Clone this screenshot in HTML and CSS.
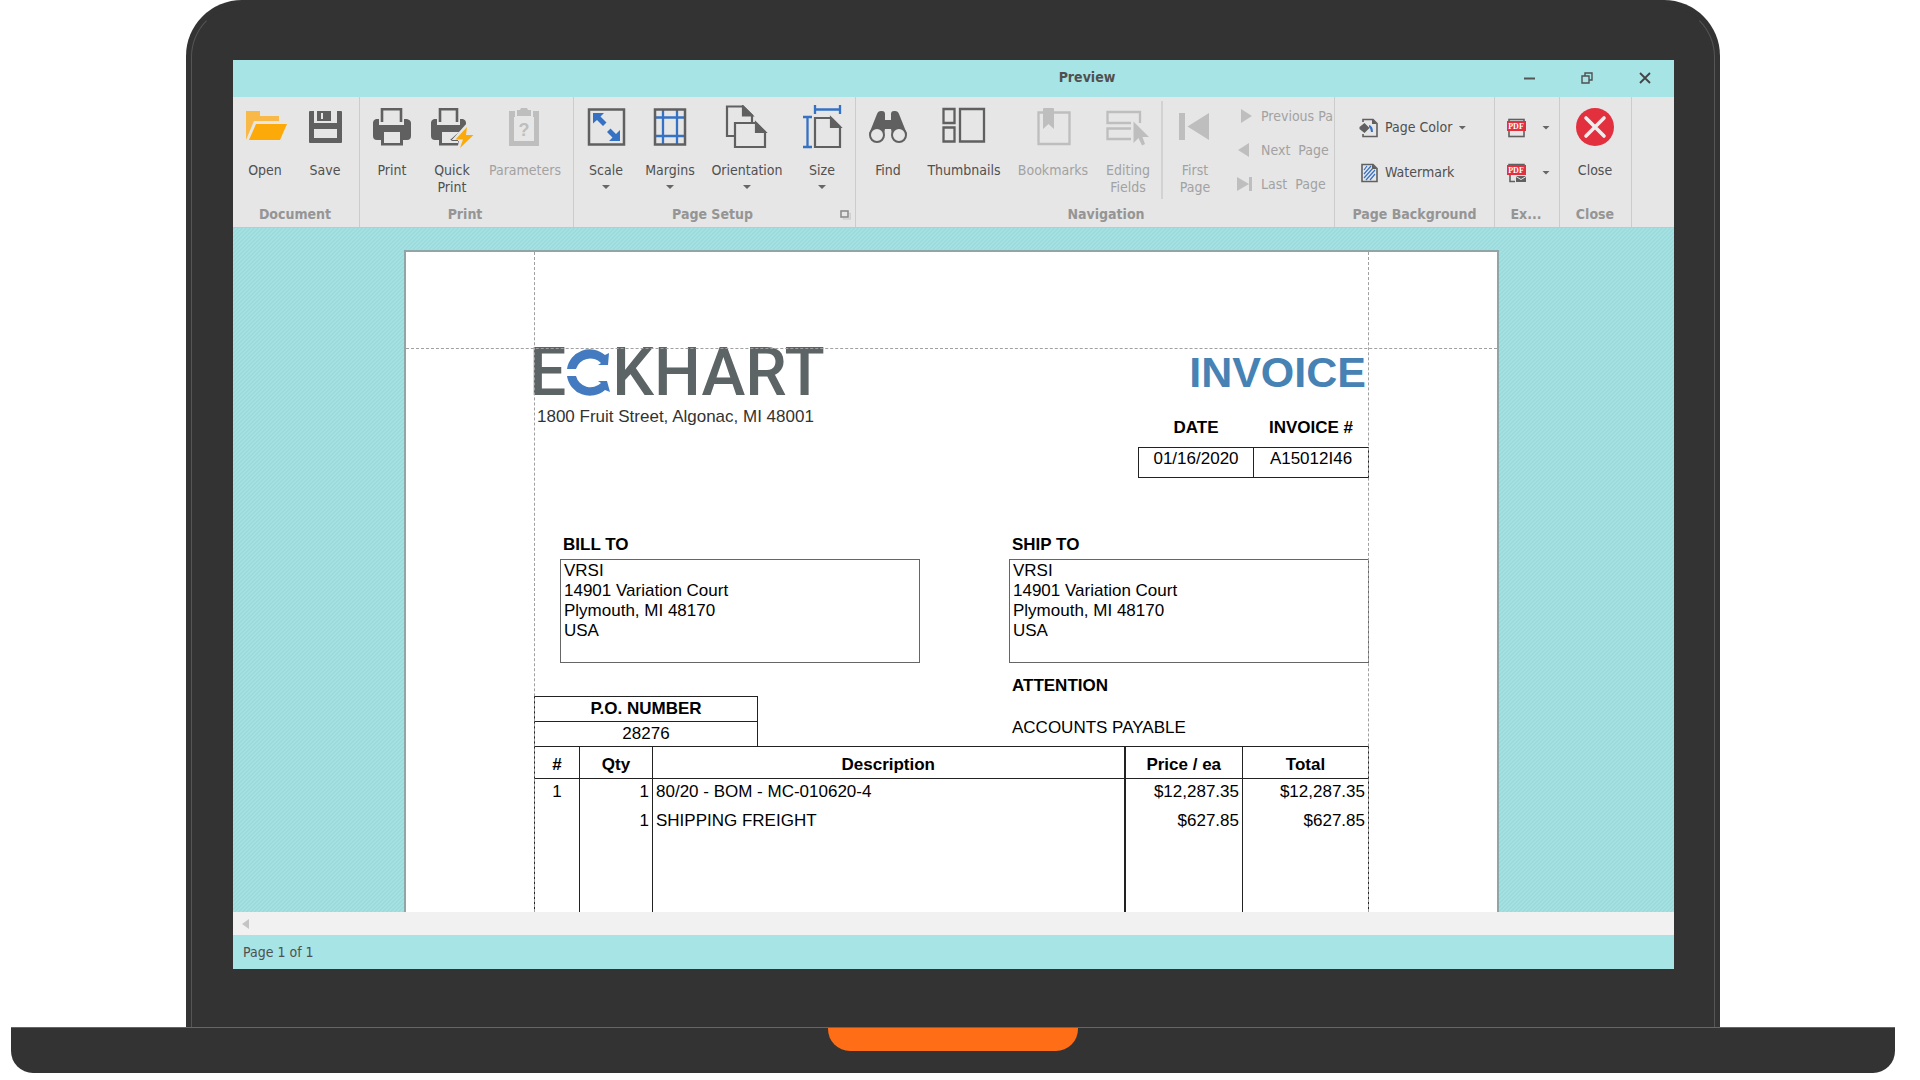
FILE: index.html
```html
<!DOCTYPE html>
<html lang="en">
<head>
<meta charset="utf-8">
<meta name="viewport" content="width=device-width, initial-scale=1">
<title>Preview</title>
<link rel="stylesheet" href="styles.css">
</head>
<body>
<div class="laptop">
  <div class="lid">
    <main class="screen">
      <header class="titlebar">
        <h1 class="titlebar-text">Preview</h1>
        <button class="win-btn" aria-label="Minimize"><svg width="12" height="12" viewBox="0 0 12 12"><path d="M1 6.5h11" stroke="#555" stroke-width="2"/></svg></button>
        <button class="win-btn" aria-label="Restore"><svg width="12" height="12" viewBox="0 0 12 12" fill="none" stroke="#505050" stroke-width="1.4"><path d="M1 4h7v7H1zM4 4V1h7v7H8"/></svg></button>
        <button class="win-btn" aria-label="Close window"><svg width="12" height="12" viewBox="0 0 12 12" stroke="#444" stroke-width="1.8"><path d="M1 1l10 10M11 1L1 11"/></svg></button>
      </header>

      <div class="ribbon">
        <section class="group">
          <div class="group-body">
            <button class="tool"><svg class="icon" viewBox="0 0 44 44"><path fill="#f9b949" d="M3 6h14v5h19v5H11L3 35z"/><path fill="#fca90a" d="M13 19h31l-7 16H6z"/></svg><span>Open</span></button>
            <button class="tool"><svg class="icon" viewBox="0 0 44 44"><path fill="#606060" fill-rule="evenodd" d="M7 6h4v12h23V6h4q1 0 1 1v30q0 1-1 1H7q-1 0-1-1V7q0-1 1-1zM11 24v9h23v-9z"/><path fill="#606060" fill-rule="evenodd" d="M14 6h14v10H14zM18 8v6h2V8z"/></svg><span>Save</span></button>
          </div>
          <h2 class="group-title">Document</h2>
        </section>

        <section class="group group-print">
          <div class="group-body">
            <button class="tool"><svg class="icon" viewBox="0 0 44 44"><path fill="none" stroke="#606060" stroke-width="2.6" d="M12 17V4.300h19V17"/><path fill="#606060" fill-rule="evenodd" d="M6 14h3v6h25v-6h3q4 1 4 4v13q0 4-4 4h-4v5.500H11V35H7q-4 0-4-4V18q0-3 3-4zM14 27v11h16V27z"/></svg><span>Print</span></button>
            <button class="tool"><svg class="icon" viewBox="0 0 44 44"><path fill="none" stroke="#606060" stroke-width="2.600" d="M10 17V4.300h17V17"/><path fill="#606060" d="M4 14h3v6h23v-6h3q3 1 3 4v3L22 35l7 0-1 5.500H9V35H5q-4 0-4-4V18q0-3 3-4z"/><path fill="#e6e6e6" d="M12 27h17l-9 8 8 0v3H12zM37 18L21 36h9l-2 8 18-18z"/><path fill="#fca90a" d="M37 22L25.500 34.500H33L30 43l13.500-13H36z"/></svg><span>Quick<br>Print</span></button>
            <button class="tool tool-lg" disabled><svg class="icon" viewBox="0 0 44 44"><path fill="#bebebe" fill-rule="evenodd" d="M6 6h6v6h18V6h6v35H6zM11 12v24h20V12z"/><path fill="#bebebe" d="M14 5h3l1-2h6l1 2h3v6H14z"/><text x="21" y="31" text-anchor="middle" class="icon-mark">?</text></svg><span>Parameters</span></button>
          </div>
          <h2 class="group-title">Print</h2>
        </section>

        <section class="group group-setup">
          <div class="group-body">
            <button class="tool"><svg class="icon" viewBox="0 0 44 44"><rect x="5" y="4.500" width="35" height="35" fill="none" stroke="#606060" stroke-width="2.500"/><path fill="#3672c4" d="M9 8h11l-3.500 3.500 6 6-3.500 3.500-6-6L9 18.500zM36 36H25l3.500-3.500-5.500-5.500 3.500-3.500 5.500 5.500 4-4z"/></svg><span>Scale</span><i class="caret"></i></button>
            <button class="tool tool-md"><svg class="icon" viewBox="0 0 44 44"><path fill="none" stroke="#3672c4" stroke-width="2.300" d="M15 5v35M29 5v35M8 12.500h29M8 31h29"/><rect x="7" y="4.500" width="30" height="35" fill="none" stroke="#606060" stroke-width="2.500"/></svg><span>Margins</span><i class="caret"></i></button>
            <button class="tool tool-lg"><svg class="icon" viewBox="0 0 44 44"><g stroke="#606060" stroke-width="2.200"><path fill="#e6e6e6" d="M2 1.500h16l9 9V31H2z"/><path fill="#606060" d="M18 1.500v9h9z"/><path fill="#e6e6e6" d="M10 18h21l9 9v15H10z"/><path fill="#606060" d="M31 18v9h9z"/></g></svg><span>Orientation</span><i class="caret"></i></button>
            <button class="tool tool-sm"><svg class="icon" viewBox="0 0 44 44"><path fill="none" stroke="#3672c4" stroke-width="2.300" d="M15 0v9M40 0v9M15 4.500h25M3 12h9M3 42h9M7.500 12v30"/><g stroke="#606060" stroke-width="2.200"><path fill="none" d="M15 13h16l9 9v20H15z"/><path fill="#606060" d="M31 13v9h9z"/></g></svg><span>Size</span><i class="caret"></i></button>
          </div>
          <div class="group-foot">
            <h2 class="group-title">Page Setup</h2>
            <button class="launcher" aria-label="Page setup options"><svg width="11" height="10" viewBox="0 0 11 10" fill="none"><path stroke="#cfcfcf" stroke-width="1.500" d="M9 3.500h1.200V9H3.500V8"/><rect x="1" y="1" width="7" height="6" stroke="#8c8c8c" stroke-width="1.600"/></svg></button>
          </div>
        </section>

        <section class="group group-nav">
          <div class="group-body">
            <button class="tool"><svg class="icon" viewBox="0 0 44 44"><path fill="#606060" d="M3 29L11 9q1-3 4-3h1q3 0 3 3v6h6V9q0-3 3-3h1q3 0 4 3l8 20H26l-1-5h-6l-1 5z"/><g fill="#e6e6e6" stroke="#606060" stroke-width="2"><circle cx="11" cy="30" r="7"/><circle cx="33" cy="30" r="7"/></g></svg><span>Find</span></button>
            <button class="tool tool-xl"><svg class="icon" viewBox="0 0 44 44"><path fill="none" stroke="#606060" stroke-width="2.300" d="M1.500 4h11v14h-11zM1.500 22.500h11v14h-11zM18 4h24v32.500H18z"/></svg><span>Thumbnails</span></button>
            <button class="tool tool-lg" disabled><svg class="icon" viewBox="0 0 44 44"><path fill="none" stroke="#bebebe" stroke-width="2.300" d="M7.500 7.500h31V39h-31z"/><path fill="#bebebe" d="M12 4q0-1 1-1h9q1 0 1 1v20l-5.500-5L12 24z"/></svg><span>Bookmarks</span></button>
            <button class="tool tool-sm" disabled><svg class="icon" viewBox="0 0 44 44"><path fill="none" stroke="#bebebe" stroke-width="2.300" d="M25 18H1.500V7H34v11M25 23.500H1.500V34H25"/><path fill="#bebebe" d="M27.500 16.500L43 32h-6.500l2.500 7-3 1.500-3.500-7.500-5 5z"/></svg><span>Editing<br>Fields</span></button>
            <div class="divider"></div>
            <button class="tool" disabled><svg class="icon" viewBox="0 0 44 44"><path fill="#bebebe" d="M6 8h6v27H6zM36 8v27L14.500 21.500z"/></svg><span>First<br>Page</span></button>
            <div class="stack stack-nav">
              <button class="mini" disabled aria-label="Previous Page"><svg width="16" height="14" viewBox="0 0 16 14"><path fill="#bebebe" d="M4 0v14l11-7z"/></svg>Previous Pa</button>
              <button class="mini" disabled><svg width="16" height="14" viewBox="0 0 16 14"><path fill="#bebebe" d="M12 0v14L1 7z"/></svg>Next&nbsp; Page</button>
              <button class="mini" disabled><svg width="16" height="14" viewBox="0 0 16 14"><path fill="#bebebe" d="M0 0v14l12-7zM12 0h3v14h-3z"/></svg>Last&nbsp; Page</button>
            </div>
          </div>
          <h2 class="group-title">Navigation</h2>
        </section>

        <section class="group group-bg">
          <div class="group-body">
            <div class="stack stack-bg">
              <button class="mini"><svg width="20" height="20" viewBox="0 0 20 20"><path fill="none" stroke="#606060" stroke-width="1.600" d="M4 4V1.500h10l4 4V18.500H4V16"/><path fill="#606060" d="M13 1v5h5zM5.500 5l5 5-5 5-5-4v-2z"/><path fill="#3672c4" d="M10 7q4 1 4 7h-2q0-3-2-5z"/></svg>Page Color<i class="caret"></i></button>
              <button class="mini"><svg width="20" height="20" viewBox="0 0 20 20"><path fill="none" stroke="#3672c4" stroke-width="1.200" d="M5 7l3-4M5 11l7-8M5 15l9-10M7 17l9-10M11 17l5-6"/><path fill="none" stroke="#606060" stroke-width="1.600" d="M3 1.500h11l4 4v13H3z"/><path fill="#606060" d="M13 1v5h5z"/></svg>Watermark</button>
            </div>
          </div>
          <h2 class="group-title">Page Background</h2>
        </section>

        <section class="group group-export">
          <div class="group-body">
            <div class="stack stack-bg">
              <button class="mini" aria-label="Export to PDF"><svg width="20" height="20" viewBox="0 0 20 20"><rect x="3" y="1.500" width="15" height="17" fill="none" stroke="#606060" stroke-width="1.600"/><path fill="#e2303e" d="M1 3h19v10H1z"/><text x="10" y="11" text-anchor="middle" class="pdf-mark">PDF</text></svg><i class="caret"></i></button>
              <button class="mini" aria-label="E-mail as PDF"><svg width="20" height="20" viewBox="0 0 20 20"><path fill="none" stroke="#606060" stroke-width="1.600" d="M3 3V1.500h15V10M4 10v8.500h5"/><path fill="#e2303e" d="M1 2h19v10H1z"/><path fill="#606060" d="M10 13h10v6H10z"/><path fill="none" stroke="#e6e6e6" d="M10 13.500l5 3 5-3"/><text x="10" y="10" text-anchor="middle" class="pdf-mark">PDF</text></svg><i class="caret"></i></button>
            </div>
          </div>
          <h2 class="group-title">Ex...</h2>
        </section>

        <section class="group group-close">
          <div class="group-body">
            <button class="tool"><svg class="icon" viewBox="0 0 44 44"><circle cx="22" cy="22" r="19" fill="#e2303e"/><path stroke="#eee" stroke-width="3.600" stroke-linecap="round" d="M13 13l18 18M31 13L13 31"/></svg><span>Close</span></button>
          </div>
          <h2 class="group-title">Close</h2>
        </section>
      </div>

      <div class="workspace">
        <article class="sheet">
          <div class="guide guide-top"></div>
          <div class="guide guide-left"></div>
          <div class="guide guide-right"></div>

          <div class="masthead">
            <div>
              <div class="logo" aria-label="Eckhart"><span>E</span><svg width="44" height="48" viewBox="0 0 44 48" fill="#447bc0"><path d="M0 20A23 23 0 0 1 38 6l4-2-1 12-10 0 3-2A15 15 0 0 0 9 20zM0 27A23 23 0 0 0 38 41l5 2-3-11-9 0 3 2A15 15 0 0 1 9 27z"/></svg><span>KHART</span></div>
              <p class="address">1800 Fruit Street, Algonac, MI 48001</p>
            </div>
            <div class="summary">
              <h2 class="invoice-title">INVOICE</h2>
              <table class="meta">
                <thead><tr><th>DATE</th><th>INVOICE #</th></tr></thead>
                <tbody><tr><td>01/16/2020</td><td>A15012I46</td></tr></tbody>
              </table>
            </div>
          </div>

          <div class="parties">
            <section class="party">
              <h3>BILL TO</h3>
              <p class="party-box">VRSI<br>14901 Variation Court<br>Plymouth, MI 48170<br>USA</p>
            </section>
            <section class="party">
              <h3>SHIP TO</h3>
              <p class="party-box">VRSI<br>14901 Variation Court<br>Plymouth, MI 48170<br>USA</p>
            </section>
          </div>

          <div class="order">
            <table class="po">
              <thead><tr><th>P.O. NUMBER</th></tr></thead>
              <tbody><tr><td>28276</td></tr></tbody>
            </table>
            <section class="attention">
              <h3>ATTENTION</h3>
              <p>ACCOUNTS PAYABLE</p>
            </section>
          </div>

          <table class="items">
            <colgroup><col class="c-num"><col class="c-qty"><col><col class="c-price"><col class="c-total"></colgroup>
            <thead><tr><th>#</th><th>Qty</th><th>Description</th><th>Price / ea</th><th>Total</th></tr></thead>
            <tbody>
              <tr><td class="mid">1</td><td class="num">1</td><td>80/20 - BOM - MC-010620-4</td><td class="num">$12,287.35</td><td class="num">$12,287.35</td></tr>
              <tr><td></td><td class="num">1</td><td>SHIPPING FREIGHT</td><td class="num">$627.85</td><td class="num">$627.85</td></tr>
              <tr class="blank"><td></td><td></td><td></td><td></td><td></td></tr>
            </tbody>
          </table>
        </article>
      </div>

      <div class="scrollbar"><button class="scroll-btn" aria-label="Scroll left"><svg width="7" height="10" viewBox="0 0 7 10"><path fill="#c4c4c4" d="M7 0v10L0 5z"/></svg></button></div>
      <footer class="statusbar">Page 1 of 1</footer>
    </main>
  </div>
  <div class="base"><div class="notch"></div></div>
</div>
</body>
</html>
```

FILE: styles.css
```css
* { box-sizing: border-box; }

body {
  margin: 0;
  background: #fff;
  font: 14px/17px "DejaVu Sans Condensed", "DejaVu Sans", sans-serif;
  color: #505050;
}

h1, h2, h3, p { margin: 0; font-size: inherit; }

button {
  margin: 0;
  padding: 0;
  border: 0;
  background: none;
  font: inherit;
  color: inherit;
}

svg { display: block; flex: none; }

/* Laptop frame */
.laptop {
  display: flex;
  flex-direction: column;
  height: 100vh;
  min-height: 800px;
  padding-bottom: 7px;
}

.lid {
  position: relative;
  flex: 1;
  min-height: 0;
  display: flex;
  margin: 0 200px 0 186px;
  padding: 60px 46px 58px 47px;
  border-radius: 56px 56px 0 0;
  background: #333;
}

.lid::before {
  content: "";
  position: absolute;
  inset: 5px 5px 0;
  border: 1px solid #555;
  border-top-color: #333;
  border-bottom: 0;
  border-radius: 52px 52px 0 0;
}

.base {
  display: flex;
  justify-content: center;
  height: 46px;
  margin: 0 25px 0 11px;
  border-top: 1px solid #666;
  border-radius: 0 0 22px 22px;
  background: #333;
}

.notch {
  width: 250px;
  height: 23px;
  border-radius: 0 0 22px 22px;
  background: #ff6d16;
}

/* Application window */
.screen {
  position: relative;
  flex: 1;
  min-width: 0;
  display: flex;
  flex-direction: column;
  background: #a6e4e6;
}

.titlebar {
  display: flex;
  align-items: center;
  height: 37px;
  padding: 0 0 2px 441px;
}

.titlebar-text { flex: 1; text-align: center; }

.win-btn {
  display: flex;
  align-items: center;
  justify-content: center;
  width: 58px;
  height: 34px;
}

/* Ribbon */
.ribbon {
  display: flex;
  height: 131px;
  border-bottom: 1px solid #c6c6c6;
  background: #e6e6e6;
}

.group {
  display: flex;
  flex-direction: column;
  flex: none;
  padding: 0 4px 4px 2px;
  border-right: 1px solid #ccc;
}

.group-body { display: flex; flex: 1; }

.group-title {
  flex: 1 0 auto;
  color: #959595;
  text-align: center;
}

.group > .group-title { flex: none; }

.group-foot { display: flex; align-items: center; }
.group-foot .group-title { padding-left: 9px; }

.launcher { width: 14px; }

.tool {
  display: flex;
  flex: none;
  flex-direction: column;
  align-items: center;
  width: 60px;
  padding-top: 8px;
}

.tool-sm { width: 64px; }
.tool-md { width: 68px; }
.tool-lg { width: 86px; }
.tool-xl { width: 92px; }

.tool:disabled, .mini:disabled { color: #a2a2a2; }

.icon { width: 44px; height: 44px; margin-bottom: 13px; }

.icon-mark { font: bold 18px "Liberation Sans", sans-serif; fill: #bebebe; }
.pdf-mark { font: bold 8px "Liberation Serif", serif; fill: #fff; }

.caret {
  width: 8px;
  height: 4px;
  background: #666;
  clip-path: polygon(0 0, 100% 0, 50% 100%);
}

.tool .caret { margin-top: 6px; }

.divider {
  flex: none;
  width: 2px;
  height: 98px;
  margin: 4px 2px 0 1px;
  background: #d2d2d2;
}

.group-print { padding-right: 5px; }
.group-setup { padding-right: 1px; }
.group-nav { width: 479px; padding-right: 0; }
.group-nav .group-body { min-width: 0; overflow: hidden; }
.group-nav .group-title { padding-left: 20px; }
.group-bg { width: 160px; padding-right: 2px; }
.group-export { width: 65px; }
.group-close { padding-right: 6px; padding-left: 5px; }

.stack {
  display: flex;
  flex-direction: column;
  min-width: 0;
}

.mini {
  display: flex;
  align-items: center;
  gap: 8px;
  height: 34px;
  white-space: nowrap;
}

.stack-nav { padding: 2px 0 0 12px; }
.stack-bg { padding: 8px 0 0 22px; }
.stack-bg .mini { gap: 6px; height: 45px; }
.group-export .stack-bg { padding-left: 9px; }
.group-export .mini { gap: 16px; }

/* Document area */
.workspace {
  flex: 1;
  min-height: 0;
  display: flex;
  padding: 22px 175px 0 171px;
  overflow: hidden;
  background: linear-gradient(135deg, #9cdadb 25%, #a4e1e2 25% 50%, #9cdadb 50% 75%, #a4e1e2 75%) 0 0 / 4px 4px;
}

.sheet {
  position: relative;
  flex: 1;
  min-width: 0;
  padding: 97px 128px 0;
  border: 2px solid #8fa5a6;
  border-bottom: 0;
  background: #fff;
  font: 17px/20px "Liberation Sans", Arial, sans-serif;
  color: #000;
}

.guide { position: absolute; border: 0 dashed #a0a0a0; }
.guide-top { top: 96px; left: 0; right: 0; border-top-width: 1px; }
.guide-left { top: 0; bottom: 0; left: 128px; border-left-width: 1px; }
.guide-right { top: 0; bottom: 0; right: 128px; border-left-width: 1px; }

.masthead { display: flex; justify-content: space-between; }

.logo {
  display: flex;
  align-items: center;
  height: 47px;
  margin-left: -5px;
  font: 500 66px/47px Roboto, sans-serif;
  color: #5c6466;
}

.logo svg { margin: 0 1px; }

.address { margin: 11px 0 0 3px; color: #333; }

.invoice-title {
  padding-right: 3px;
  font-size: 43px;
  line-height: 46px;
  text-align: right;
  color: #4682b4;
}

table { border-collapse: collapse; }
th, td { padding: 0; }

.meta { table-layout: fixed; width: 231px; margin-top: 23px; text-align: center; }
.meta th { height: 29px; vertical-align: top; }
.meta td { height: 30px; padding-bottom: 6px; border: 1px solid #222; }

.parties {
  display: flex;
  justify-content: space-between;
  padding: 57px 0 0 26px;
}

.party { width: 360px; }
.party h3 { padding-left: 3px; }

.party-box {
  min-height: 104px;
  margin-top: 4px;
  padding: 1px 3px;
  border: 1px solid #666;
}

.order {
  display: flex;
  align-items: flex-end;
  justify-content: space-between;
}

.po { width: 224px; margin-bottom: -1px; text-align: center; }
.po th, .po td { height: 25px; border: 1px solid #222; }

.attention { width: 360px; padding: 13px 0 8px 3px; }
.attention p { margin-top: 22px; }

.items { table-layout: fixed; width: 100%; }
.items th, .items td { border: 1px solid #222; }
.items th { height: 32px; padding-top: 5px; }
.items td { height: 29px; padding: 0 3px 1px; border-width: 0 1px; }
.items th:nth-child(4), .items td:nth-child(4) { border-left-width: 2px; }
.items .num { text-align: right; }
.items .mid { text-align: center; }
.items .blank td { height: 160px; }
.c-num { width: 45px; }
.c-qty { width: 73px; }
.c-price { width: 118px; }
.c-total { width: 126px; }

/* Bottom bars */
.scrollbar {
  display: flex;
  align-items: center;
  height: 23px;
  padding-left: 9px;
  background: #f1f1f1;
}

.statusbar {
  height: 34px;
  padding: 9px 10px;
}
```
